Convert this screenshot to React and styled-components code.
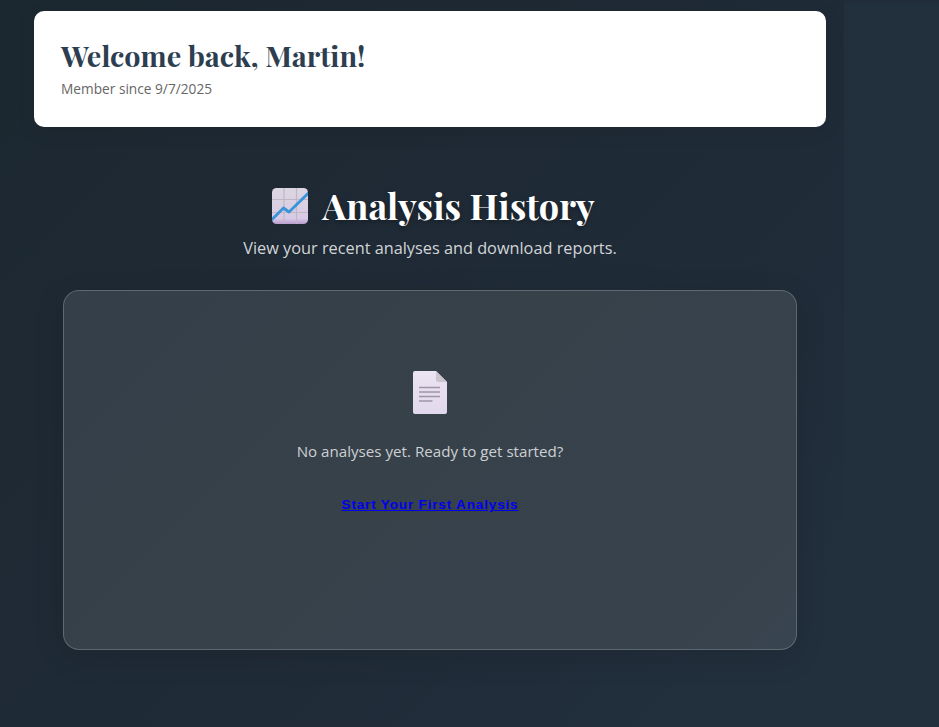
import React from "react";
import styled, { createGlobalStyle } from "styled-components";

const GlobalStyle = createGlobalStyle`
  * { box-sizing: border-box; }
  body { margin: 0; background: #222f3c; }
  h1, h2, p { margin: 0; font-weight: inherit; }
`;

const sans = `"Segoe UI", "Open Sans", "Noto Sans", sans-serif`;
const serif = `"Playfair Display", "Liberation Serif", serif`;

const Page = styled.div`
  height: 727px;
  overflow: hidden;
  font-family: ${sans};
  background: linear-gradient(180deg, #202c38 0, #222f3c 5px);
`;

const Main = styled.main`
  width: 844px;
  height: 727px;
  padding: 11px 18px 0 34px;
  overflow: hidden;
  background: linear-gradient(135deg, #1c2830 0%, #1e2934 30%, #1f2b37 60%, #222f3c 90%);
`;

const WelcomeCard = styled.header`
  height: 116px;
  padding: 26px 27px;
  border-radius: 10px;
  background: #fff;
  box-shadow: 0 4px 20px rgba(0, 0, 0, 0.08);
`;

const WelcomeTitle = styled.h1`
  font: 700 28.8px/37px ${serif};
  white-space: nowrap;
  color: #2c3e50;
`;

const Member = styled.p`
  margin-top: 5px;
  font-size: 13.7px;
  line-height: 20px;
  white-space: nowrap;
  color: #666;
`;

const History = styled.section`
  display: flex;
  flex-direction: column;
  align-items: center;
  padding: 54px 29px 0;
`;

const HistoryTitle = styled.h2`
  display: flex;
  align-items: center;
  gap: 13px;
  height: 50px;
  margin-left: 6px;
  font: 700 36px/50px ${serif};
  white-space: nowrap;
  color: #fff;
  text-shadow: 0 2px 4px rgba(0, 0, 0, 0.3);
`;

const HistoryTitleText = styled.span`
  padding-bottom: 3px;
`;

const Subtitle = styled.p`
  margin-top: 4px;
  font-size: 16.3px;
  line-height: 26px;
  white-space: nowrap;
  color: #d2d5d7;
`;

const Panel = styled.div`
  display: flex;
  flex-direction: column;
  align-items: center;
  align-self: stretch;
  height: 360px;
  margin-top: 29px;
  padding-top: 78px;
  border: 1px solid rgba(255, 255, 255, 0.2);
  border-radius: 16px;
  background: linear-gradient(135deg, #353f49 0%, #36414a 45%, #38424d 85%, #38444f 100%);
  box-shadow: 0 8px 32px rgba(0, 0, 0, 0.1);
`;

const EmptyText = styled.p`
  margin-top: 25px;
  font-size: 15.15px;
  line-height: 24px;
  white-space: nowrap;
  color: #cdd0d2;
`;

const StartLink = styled.a`
  margin-top: 34px;
  font: 700 13.6px/16px "Liberation Sans", Arial, sans-serif;
  letter-spacing: 0.8px;
  white-space: nowrap;
  color: #0000ee;
  text-decoration: underline;
`;

const ChartIcon = () => (
  <svg width="38" height="38" viewBox="0 0 38 38" aria-hidden="true">
    <defs>
      <linearGradient id="tile" x1="0" y1="0" x2="0" y2="1">
        <stop offset="0" stopColor="#dcd6e1" />
        <stop offset=".85" stopColor="#d8cae5" />
        <stop offset="1" stopColor="#b99bcf" />
      </linearGradient>
      <clipPath id="tileClip"><rect x="1" y="1" width="36" height="36" rx="4.5" /></clipPath>
    </defs>
    <g clipPath="url(#tileClip)">
      <rect x="1" y="1" width="36" height="36" fill="url(#tile)" />
      <path d="M13 1v36M25.5 1v36M1 12.5h36M1 25.5h36" stroke="#beb7c4" strokeWidth="1.2" />
      <path d="M0 33.5 12.5 21 18 25 38 5.5" fill="none" stroke="#3994da" strokeWidth="2.8" strokeLinejoin="round" />
    </g>
  </svg>
);

const DocumentIcon = () => (
  <svg width="36" height="45" viewBox="0 0 36 45" aria-hidden="true">
    <defs>
      <linearGradient id="paper" x1="0" y1="0" x2="0" y2="1">
        <stop offset="0" stopColor="#ebe4f2" />
        <stop offset="1" stopColor="#e2d8ed" />
      </linearGradient>
    </defs>
    <path d="M3 2H24L35 13V43Q35 45 33 45H3Q1 45 1 43V4Q1 2 3 2Z" fill="url(#paper)" />
    <path d="M24 2 35 13H26Q24 13 24 11Z" fill="#cbc5d0" />
    <path d="M7 18.5H28M7 23H28M7 27.5H28M7 32H20.5" stroke="#9d97a5" strokeWidth="1.6" />
  </svg>
);

export default function App() {
  return (
    <>
      <GlobalStyle />
      <Page>
        <Main>
          <WelcomeCard>
            <WelcomeTitle>Welcome back, Martin!</WelcomeTitle>
            <Member>Member since 9/7/2025</Member>
          </WelcomeCard>
          <History>
            <HistoryTitle>
              <ChartIcon />
              <HistoryTitleText>Analysis History</HistoryTitleText>
            </HistoryTitle>
            <Subtitle>View your recent analyses and download reports.</Subtitle>
            <Panel>
              <DocumentIcon />
              <EmptyText>No analyses yet. Ready to get started?</EmptyText>
              <StartLink href="#">Start Your First Analysis</StartLink>
            </Panel>
          </History>
        </Main>
      </Page>
    </>
  );
}
